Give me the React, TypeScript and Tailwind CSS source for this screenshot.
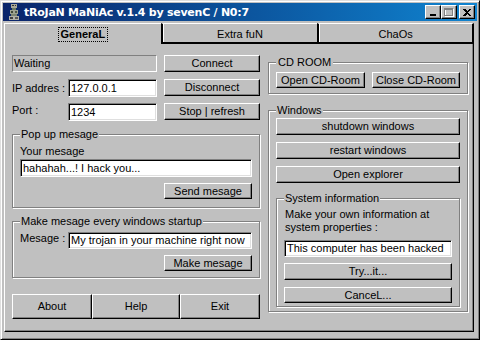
import React from "react";

const btn =
  "flex items-center justify-center bg-[#c0c0c0] border border-t-white border-l-white border-r-black border-b-black shadow-[inset_-1px_-1px_0_#808080] text-black leading-[13px] whitespace-nowrap";
const input =
  "flex items-center bg-white border border-t-[#808080] border-l-[#808080] border-r-white border-b-white shadow-[inset_1px_1px_0_#000,inset_-1px_-1px_0_#dfdfdf] pl-[2px] whitespace-nowrap overflow-hidden text-black";
const group =
  "relative border border-[#808080] shadow-[1px_1px_0_#fff,inset_1px_1px_0_#fff]";
const legend =
  "absolute -top-[7px] left-[7px] bg-[#c0c0c0] px-[1px] leading-[13px] whitespace-nowrap";

function TitleIcon() {
  return (
    <svg width="12" height="16" viewBox="0 0 12 16" shapeRendering="crispEdges">
      <rect x="3" y="0" width="6" height="4" fill="#a8a898" />
      <rect x="4" y="1" width="2" height="1" fill="#303030" />
      <rect x="7" y="1" width="1" height="1" fill="#303030" />
      <rect x="4" y="4" width="4" height="2" fill="#6d7a62" />
      <rect x="2" y="6" width="8" height="4" fill="#9ea392" />
      <rect x="3" y="7" width="2" height="2" fill="#404838" />
      <rect x="7" y="7" width="2" height="2" fill="#505848" />
      <rect x="3" y="10" width="6" height="2" fill="#7c8470" />
      <rect x="1" y="12" width="10" height="4" fill="#b0b0a8" />
      <rect x="2" y="13" width="3" height="2" fill="#404040" />
      <rect x="7" y="13" width="3" height="2" fill="#585858" />
    </svg>
  );
}

function CapButton({ children }: { children: React.ReactNode }) {
  return <div className={btn + " h-[14px] w-[16px]"}>{children}</div>;
}

export default function App() {
  return (
    <div className="flex h-[340px] w-[480px] flex-col border border-t-[#dfdfdf] border-l-[#dfdfdf] border-r-black border-b-black bg-[#c0c0c0] p-[2px] font-['Liberation_Sans',Arial,sans-serif] text-[11px] leading-[13px] text-black shadow-[inset_1px_1px_0_#fff,inset_-1px_-1px_0_#808080]">
      {/* Title bar */}
      <div className="flex h-[18px] shrink-0 items-center bg-linear-to-r from-[#0a246a] to-[#1084d0] pl-[5px] pr-[2px]">
        <TitleIcon />
        <span className="ml-[4px] font-['DejaVu_Sans',Verdana,sans-serif] text-[11px] font-bold tracking-[-0.25px] text-white">
          tRoJaN MaNiAc v.1.4 by sevenC / N0:7
        </span>
        <div className="ml-auto flex items-center">
          <CapButton>
            <svg width="8" height="8" viewBox="0 0 8 8" shapeRendering="crispEdges">
              <rect x="1" y="6" width="6" height="2" fill="#000" />
            </svg>
          </CapButton>
          <CapButton>
            <svg width="10" height="9" viewBox="0 0 10 9" shapeRendering="crispEdges">
              <rect x="1.5" y="1.5" width="8" height="7" fill="none" stroke="#fff" />
              <rect x="0.5" y="0.5" width="8" height="7" fill="none" stroke="#808080" />
              <rect x="0" y="1" width="9" height="1" fill="#808080" />
            </svg>
          </CapButton>
          <div className="ml-[2px]">
            <CapButton>
              <svg width="8" height="7" viewBox="0 0 8 7" shapeRendering="crispEdges">
                <path d="M0 0h2l2 2 2-2h2L5 3.5 8 7H6L4 5 2 7H0l3-3.5z" fill="#000" />
              </svg>
            </CapButton>
          </div>
        </div>
      </div>

      {/* Tab control */}
      <div className="mb-[5px] ml-[1px] mr-[3px] mt-[2px] flex flex-1 flex-col">
        <div className="grid h-[21px] shrink-0 grid-cols-3">
          <div className="flex justify-center border-l border-t border-l-white border-t-white pt-[3px]">
            <span className="h-[15px] border border-dotted border-black px-[2px] font-bold leading-[13px]">
              GeneraL
            </span>
          </div>
          <div className="flex justify-center border-b-2 border-l-2 border-t border-b-black border-l-black border-t-white pt-[4px] shadow-[inset_1px_0_0_#fff]">
            Extra fuN
          </div>
          <div className="flex justify-center border-b-2 border-l-2 border-r-2 border-t border-b-black border-l-black border-r-black border-t-white pt-[4px] shadow-[inset_1px_0_0_#fff]">
            ChaOs
          </div>
        </div>

        <div className="flex flex-1 gap-[8px] border-b border-l border-r border-b-black border-l-white border-r-black pl-[7px] pt-[11px] shadow-[inset_-1px_-1px_0_#808080]">
          {/* Left column */}
          <div className="flex w-[248px] flex-col">
            <div className="grid grid-cols-[145px_96px] gap-x-[7px]">
              <div className="flex h-[17px] items-center border border-b-white border-l-[#808080] border-r-white border-t-[#808080] pl-[1px]">
                Waiting
              </div>
              <div className={btn + " h-[17px]"}>Connect</div>

              <div className="mt-[7px] flex h-[18px] items-center">
                <span className="w-[56px] shrink-0">IP addres :</span>
                <div className={input + " h-[18px] w-[89px]"}>127.0.0.1</div>
              </div>
              <div className={btn + " mt-[7px] h-[17px]"}>Disconnect</div>

              <div className="mt-[6px] flex h-[18px] items-center">
                <span className="w-[56px] shrink-0 self-start pt-[1px]">Port :</span>
                <div className={input + " h-[18px] w-[89px]"}>1234</div>
              </div>
              <div className={btn + " mt-[6px] h-[17px]"}>Stop | refresh</div>
            </div>

            <div className={group + " mt-[13px] flex flex-col px-[7px] pb-[8px] pt-[10px]"}>
              <span className={legend}>Pop up mesage</span>
              <span className="leading-[13px]">Your mesage</span>
              <div className={input + " mt-[1px] h-[18px]"}>hahahah...! I hack you...</div>
              <div className={btn + " mt-[6px] h-[16px] w-[88px] self-end"}>Send mesage</div>
            </div>

            <div className={group + " mt-[13px] flex flex-col px-[7px] pb-[6px] pt-[10px]"}>
              <span className={legend}>Make mesage every windows startup</span>
              <div className="flex h-[17px]">
                <span className="w-[48px] shrink-0 leading-[13px]">Mesage :</span>
                <div className={input + " h-[17px] flex-1"}>My trojan in your machine right now</div>
              </div>
              <div className={btn + " mt-[6px] h-[16px] w-[88px] self-end"}>Make mesage</div>
            </div>

            <div className="mt-[16px] grid h-[25px] grid-cols-[80px_88px_80px]">
              <div className={btn}>About</div>
              <div className={btn}>Help</div>
              <div className={btn}>Exit</div>
            </div>
          </div>

          {/* Right column */}
          <div className="flex w-[200px] flex-col">
            <div className={group + " mt-[7px] flex gap-[7px] px-[7px] pb-[5px] pt-[9px]"}>
              <span className={legend + " px-[2px]"}>CD ROOM</span>
              <div className={btn + " h-[16px] w-[89px]"}>Open CD-Room</div>
              <div className={btn + " h-[16px] w-[88px]"}>Close CD-Room</div>
            </div>

            <div className={group + " mt-[16px] flex flex-col px-[7px] pb-[4px] pt-[7px]"}>
              <span className={legend}>Windows</span>
              <div className={btn + " h-[17px]"}>shutdown windows</div>
              <div className={btn + " mt-[7px] h-[17px]"}>restart windows</div>
              <div className={btn + " mt-[7px] h-[17px]"}>Open explorer</div>

              <div className={group + " mt-[15px] flex flex-col px-[7px] pb-[3px] pt-[9px]"}>
                <span className={legend}>System information</span>
                <span className="pl-[1px] leading-[13px]">
                  Make your own information at
                  <br />
                  system properties :
                </span>
                <div className={input + " mt-[6px] h-[17px]"}>This computer has been hacked</div>
                <div className={btn + " mt-[6px] h-[17px]"}>Try...it...</div>
                <div className={btn + " mt-[7px] h-[16px]"}>CanceL...</div>
              </div>
            </div>
          </div>
        </div>
      </div>
    </div>
  );
}
